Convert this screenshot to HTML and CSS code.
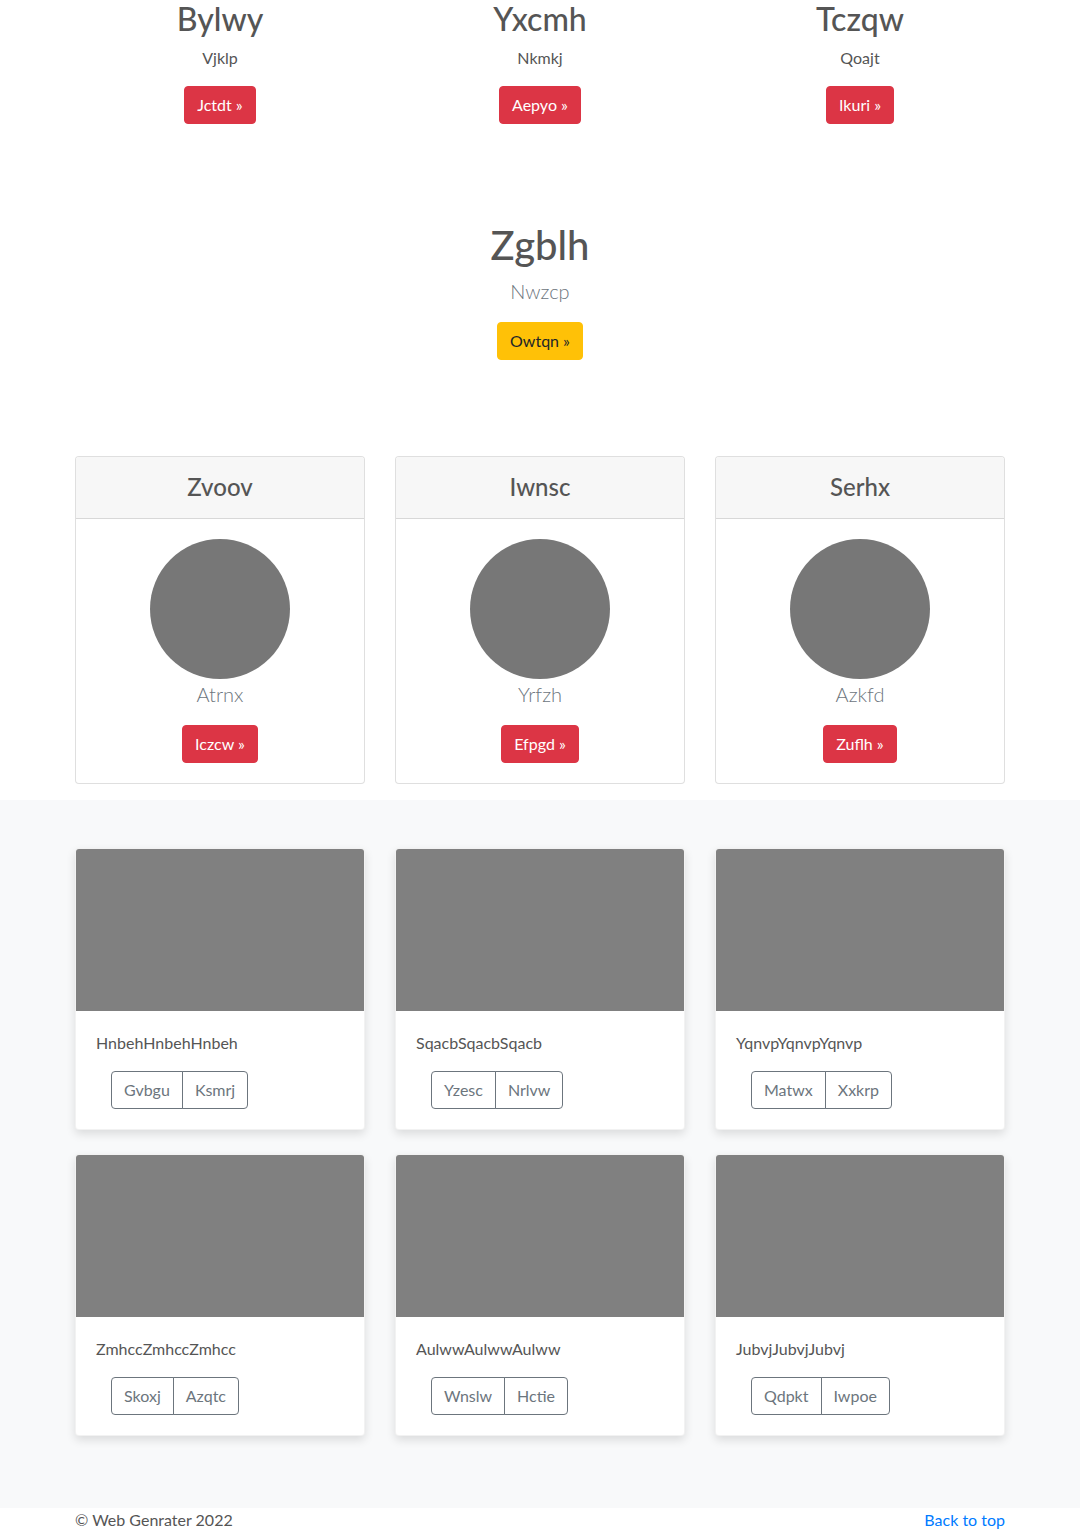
FILE: index.html
```html
<!DOCTYPE html>
<html lang="en">
  <head>
    <meta charset="UTF-8" />
    <meta name="viewport" content="width=device-width, initial-scale=1.0" />
    <title>Web Genrater</title>
    <link rel="stylesheet" href="styles.css">
  </head>
  <body>
    <main>
      <div class="container">
        <div class="intro-row">
          <div class="intro-col">
            <h2>Bylwy</h2>
            <p>Vjklp</p>
            <a class="btn btn-red" href="#">Jctdt &raquo;</a>
          </div>
          <div class="intro-col">
            <h2>Yxcmh</h2>
            <p>Nkmkj</p>
            <a class="btn btn-red" href="#">Aepyo &raquo;</a>
          </div>
          <div class="intro-col">
            <h2>Tczqw</h2>
            <p>Qoajt</p>
            <a class="btn btn-red" href="#">Ikuri &raquo;</a>
          </div>
        </div>

        <div class="feature">
          <h1>Zgblh</h1>
          <p class="lead">Nwzcp</p>
          <a class="btn btn-yellow" href="#">Owtqn &raquo;</a>
        </div>

        <div class="team-row">
          <div class="card team-card">
            <div class="card-header"><h4>Zvoov</h4></div>
            <div class="card-body">
              <div class="avatar"></div>
              <p class="lead">Atrnx</p>
              <a class="btn btn-red" href="#">Iczcw &raquo;</a>
            </div>
          </div>
          <div class="card team-card">
            <div class="card-header"><h4>Iwnsc</h4></div>
            <div class="card-body">
              <div class="avatar"></div>
              <p class="lead">Yrfzh</p>
              <a class="btn btn-red" href="#">Efpgd &raquo;</a>
            </div>
          </div>
          <div class="card team-card">
            <div class="card-header"><h4>Serhx</h4></div>
            <div class="card-body">
              <div class="avatar"></div>
              <p class="lead">Azkfd</p>
              <a class="btn btn-red" href="#">Zuflh &raquo;</a>
            </div>
          </div>
        </div>
      </div>

      <div class="album">
        <div class="container">
          <div class="album-grid">
            <div class="card album-card">
              <div class="thumb"></div>
              <div class="card-body">
                <p>HnbehHnbehHnbeh</p>
                <div class="btn-group">
                  <button class="btn btn-outline">Gvbgu</button>
                  <button class="btn btn-outline">Ksmrj</button>
                </div>
              </div>
            </div>
            <div class="card album-card">
              <div class="thumb"></div>
              <div class="card-body">
                <p>SqacbSqacbSqacb</p>
                <div class="btn-group">
                  <button class="btn btn-outline">Yzesc</button>
                  <button class="btn btn-outline">Nrlvw</button>
                </div>
              </div>
            </div>
            <div class="card album-card">
              <div class="thumb"></div>
              <div class="card-body">
                <p>YqnvpYqnvpYqnvp</p>
                <div class="btn-group">
                  <button class="btn btn-outline">Matwx</button>
                  <button class="btn btn-outline">Xxkrp</button>
                </div>
              </div>
            </div>
            <div class="card album-card">
              <div class="thumb"></div>
              <div class="card-body">
                <p>ZmhccZmhccZmhcc</p>
                <div class="btn-group">
                  <button class="btn btn-outline">Skoxj</button>
                  <button class="btn btn-outline">Azqtc</button>
                </div>
              </div>
            </div>
            <div class="card album-card">
              <div class="thumb"></div>
              <div class="card-body">
                <p>AulwwAulwwAulww</p>
                <div class="btn-group">
                  <button class="btn btn-outline">Wnslw</button>
                  <button class="btn btn-outline">Hctie</button>
                </div>
              </div>
            </div>
            <div class="card album-card">
              <div class="thumb"></div>
              <div class="card-body">
                <p>JubvjJubvjJubvj</p>
                <div class="btn-group">
                  <button class="btn btn-outline">Qdpkt</button>
                  <button class="btn btn-outline">Iwpoe</button>
                </div>
              </div>
            </div>
          </div>
        </div>
      </div>
    </main>

    <footer class="footer">
      <div class="container footer-inner">
        <p>&copy; Web Genrater 2022</p>
        <a href="#">Back to top</a>
      </div>
    </footer>
  </body>
</html>
```

FILE: styles.css
```css
*{
    box-sizing: border-box;
}

body{
    margin: 0;
    font-family: Lato, "Noto Sans", sans-serif;
    font-size: 16px;
    line-height: 1.5;
    color: #555;
    background: #fff;
}

h1, h2, h4{
    margin: 0 0 8px;
    font-weight: 500;
    line-height: 1.2;
}

p{
    margin: 0 0 16px;
}

.container{
    width: 960px;
    margin: 0 auto;
    padding: 0 15px;
}

/* buttons */
.btn{
    display: inline-block;
    padding: 6px 12px;
    font-family: inherit;
    font-size: 16px;
    line-height: 24px;
    border: 1px solid transparent;
    border-radius: 4px;
    text-decoration: none;
    cursor: pointer;
    background: none;
}
.btn-red{
    background: #dc3545;
    border-color: #dc3545;
    color: #fff;
}
.btn-yellow{
    background: #ffc107;
    border-color: #ffc107;
    color: #212529;
}
.btn-outline{
    color: #6c757d;
    border-color: #6c757d;
}

.lead{
    font-size: 20px;
    font-weight: 300;
    color: #6c757d;
}

/* top columns */
.intro-row{
    display: grid;
    grid-template-columns: repeat(3, 1fr);
    gap: 30px;
    text-align: center;
}
.intro-col h2{
    font-size: 32px;
}

.feature{
    text-align: center;
    padding: 97px 0 96px;
}
.feature h1{
    font-size: 40px;
    margin-bottom: 7px;
}

/* cards */
.card{
    background: #fff;
    border: 1px solid rgba(0, 0, 0, 0.125);
    border-radius: 4px;
    overflow: hidden;
}
.card-header{
    padding: 16px 20px;
    background: #f7f7f7;
    border-bottom: 1px solid rgba(0, 0, 0, 0.125);
    text-align: center;
}
.card-header h4{
    margin: 0;
    font-size: 24px;
}
.card-body{
    padding: 20px;
}

.team-row{
    display: grid;
    grid-template-columns: repeat(3, 1fr);
    gap: 30px;
    margin-bottom: 16px;
}
.team-card .card-body{
    text-align: center;
}
.avatar{
    width: 140px;
    height: 140px;
    margin: 0 auto;
    border-radius: 50%;
    background: #777;
}

/* album */
.album{
    background: #f8f9fa;
    padding: 48px 0 72px;
}
.album-grid{
    display: grid;
    grid-template-columns: repeat(3, 1fr);
    column-gap: 30px;
    row-gap: 24px;
}
.album-card{
    border-color: rgba(0, 0, 0, 0.05);
    box-shadow: 0 4px 10px rgba(0, 0, 0, 0.12);
}
.thumb{
    height: 162px;
    background: #808080;
}
.album-card p{
    color: #555;
}
.btn-group{
    display: inline-flex;
    margin-left: 15px;
}
.btn-group .btn:first-child{
    border-radius: 4px 0 0 4px;
}
.btn-group .btn:last-child{
    border-radius: 0 4px 4px 0;
    margin-left: -1px;
}

/* footer */
.footer{
    padding-bottom: 48px;
}
.footer-inner{
    display: flex;
    justify-content: space-between;
}
.footer p{
    margin: 0;
    color: #555;
}
.footer a{
    color: #007bff;
    text-decoration: none;
}
```
